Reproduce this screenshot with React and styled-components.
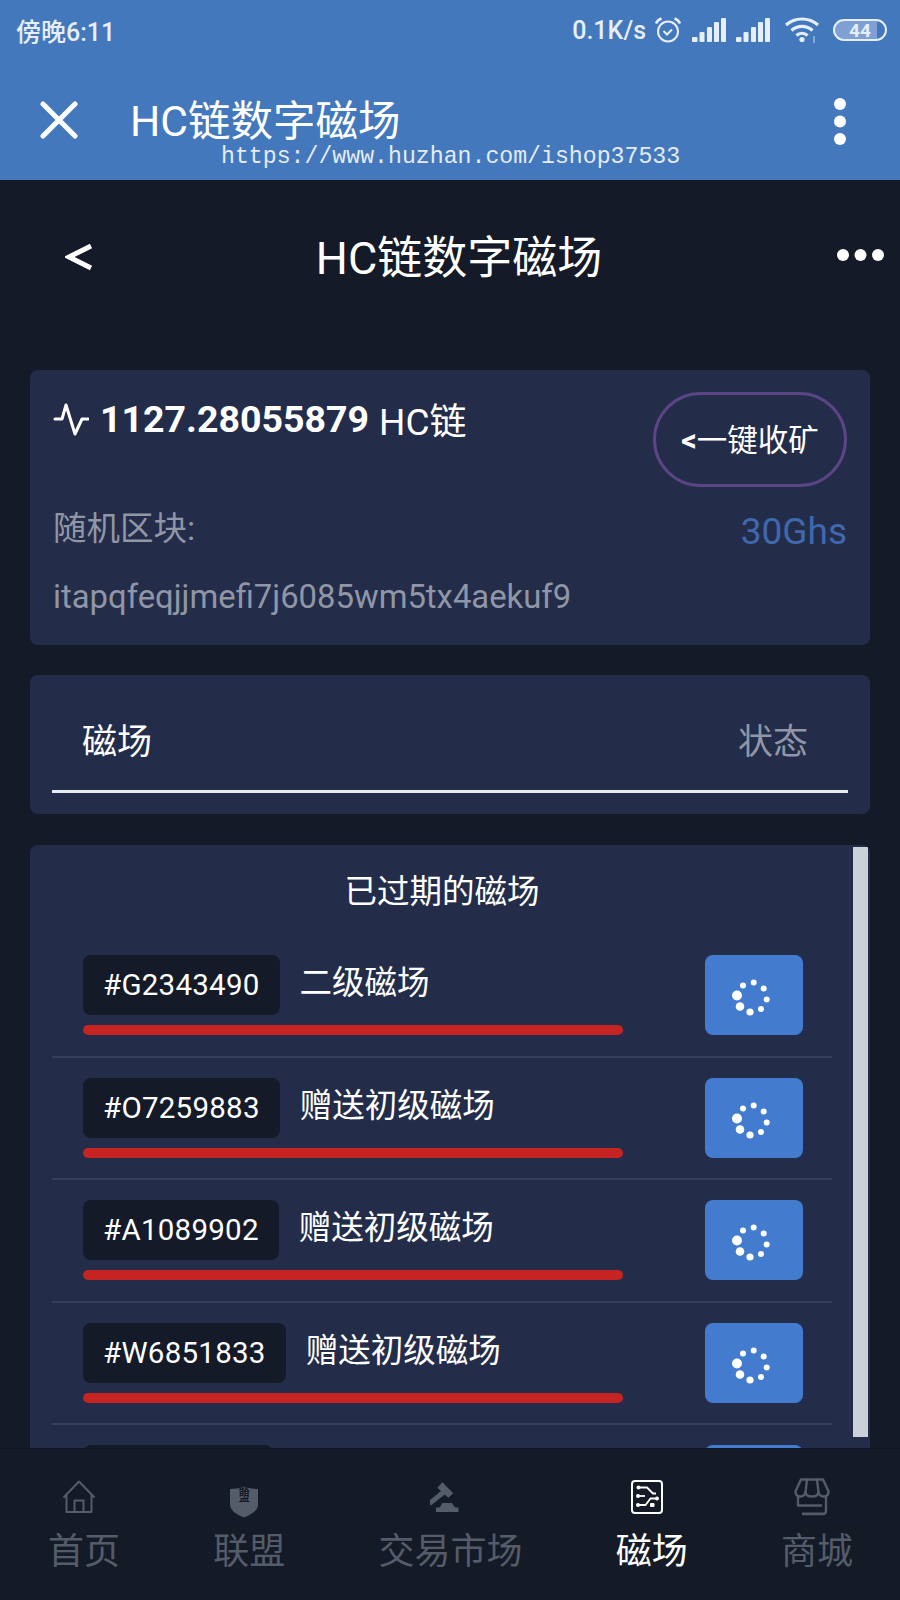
import React from "react";
import styled, { createGlobalStyle } from "styled-components";

const FONT = `Roboto, "Noto Sans CJK SC", sans-serif`;

const GlobalStyle = createGlobalStyle`
  html, body {
    margin: 0;
    padding: 0;
    background: #141a27;
  }
  * { box-sizing: border-box; }
`;

const Screen = styled.div`
  position: relative;
  width: 900px;
  height: 1600px;
  overflow: hidden;
  background: #141a27;
  color: #fff;
  font-family: ${FONT};
`;

const AppBar = styled.header`
  height: 180px;
  background: #4478bd;
  display: flex;
  flex-direction: column;
`;

const StatusBar = styled.div`
  height: 60px;
  padding: 0 13px 0 16px;
  display: flex;
  align-items: center;
  color: #e6eef8;
`;

const Clock = styled.span`
  font-size: 25px;
  font-weight: 500;
  flex: 1;
`;

const Speed = styled.span`
  font-size: 25px;
  font-weight: 500;
  margin-right: 8px;
`;

const StatusIcons = styled.div`
  display: flex;
  align-items: center;
  gap: 10px;
`;

const Battery = styled.div`
  width: 54px;
  height: 22px;
  border: 2.5px solid #e6eef8;
  border-radius: 11px;
  margin-left: 3px;
  display: flex;
  align-items: center;
  justify-content: center;
  font-size: 19px;
  font-weight: 700;
  color: #e6eef8;
  background: linear-gradient(90deg, #7ea0d4 84%, transparent 84%);
`;

const TitleBar = styled.div`
  flex: 1;
  padding: 0 54px 0 40px;
  display: flex;
  align-items: center;
`;

const BarTitle = styled.h1`
  flex: 1;
  margin: 4px 0 0 52px;
  font-size: 42.5px;
  font-weight: 400;
  line-height: 1;
`;

const KebabWrap = styled.div`
  display: flex;
  margin-top: 2px;
`;

const Watermark = styled.div`
  position: absolute;
  left: 221px;
  top: 144px;
  font-family: "Liberation Mono", monospace;
  font-size: 23.2px;
  line-height: 26px;
  color: #e4ebf6;
  white-space: nowrap;
`;

const PageHeader = styled.div`
  height: 150px;
  padding: 0 16px 0 65px;
  display: flex;
  align-items: center;
  justify-content: space-between;
  margin-bottom: 40px;
`;

const BackIcon = styled.svg`
  margin-top: 4px;
`;

const PageTitle = styled.h2`
  margin: 6px 12px 0 0;
  font-size: 45px;
  font-weight: 400;
  line-height: 1;
`;

const Content = styled.main`
  padding: 0 30px;
  display: flex;
  flex-direction: column;
  gap: 30px;
`;

const Card = styled.section`
  background: #232d4a;
  border-radius: 8px;
`;

const BalanceCard = styled(Card)`
  height: 275px;
  padding: 22px 23px 0 23px;
  display: flex;
  flex-direction: column;
`;

const BalanceTop = styled.div`
  display: flex;
  justify-content: space-between;
  align-items: flex-start;
  height: 112.5px;
`;

const Balance = styled.div`
  display: flex;
  align-items: center;
  font-size: 37px;
  height: 48px;
  margin-top: 3px;
`;

const BalanceValue = styled.b`
  font-size: 37.5px;
  font-weight: 700;
  margin: 0 10px 0 11px;
`;

const CollectButton = styled.button`
  width: 194px;
  height: 95px;
  border: 3px solid #5b4584;
  border-radius: 48px;
  background: transparent;
  color: #fff;
  font-family: ${FONT};
  font-size: 30.5px;
  padding: 0 0 4px;

  b {
    font-weight: 700;
  }
`;

const BlockRow = styled.div`
  display: flex;
  justify-content: space-between;
  align-items: flex-start;
`;

const MutedLabel = styled.span`
  font-size: 33.5px;
  color: #9096a6;
  line-height: 48px;
`;

const Hash = styled.div`
  font-size: 32.85px;
  color: #9096a6;
  line-height: 48px;
  margin-top: 17px;
`;

const Power = styled.span`
  font-size: 37px;
  color: #3f68ae;
  line-height: 48px;
  margin-top: 3.5px;
`;

const TabsCard = styled(Card)`
  height: 139px;
  padding: 0 22px;
  margin-bottom: 1px;
`;

const Tabs = styled.div`
  height: 118px;
  padding: 11px 40px 0 30px;
  display: flex;
  align-items: center;
  justify-content: space-between;
  border-bottom: 3px solid #e8ebf2;
  font-size: 35px;
`;

const TabMuted = styled.span`
  color: #9096a6;
`;

const ListCard = styled(Card)`
  position: relative;
  height: 640px;
  padding: 0 38px 0 22px;
  overflow: hidden;
`;

const Scrollbar = styled.div`
  position: absolute;
  right: 2.5px;
  top: 2px;
  width: 15px;
  height: 590px;
  background: #ccd0d9;
`;

const ListTitle = styled.div`
  height: 90px;
  padding-bottom: 4px;
  display: flex;
  align-items: center;
  justify-content: center;
  font-size: 32.5px;
`;

const Row = styled.div`
  height: 122.5px;
  border-bottom: 2px solid #363f5c;
  padding: 20px 29px 0 31px;
  display: flex;
  justify-content: space-between;
`;

const RowMain = styled.div`
  width: 540px;
`;

const RowHead = styled.div`
  display: flex;
  align-items: flex-start;
  height: 70px;
`;

const Tag = styled.span`
  height: 60px;
  min-width: 190px;
  padding: 0 20px;
  display: flex;
  align-items: center;
  background: #141a28;
  border-radius: 8px;
  font-size: 29.5px;
  letter-spacing: 0.25px;
`;

const RowName = styled.span`
  margin-left: 20px;
  font-size: 32.5px;
  line-height: 56px;
`;

const Progress = styled.div`
  height: 10px;
  border-radius: 5px;
  background: #c62323;
`;

const SpinnerButton = styled.button`
  width: 98px;
  height: 80px;
  padding: 0;
  border: 0;
  border-radius: 8px;
  background: #437bcf;
  display: flex;
  align-items: center;
  justify-content: center;
`;

const BottomNav = styled.nav`
  position: absolute;
  left: 0;
  right: 0;
  bottom: 0;
  height: 152px;
  padding: 20px 47px 0 48px;
  background: #141a26;
  border-top: 1px solid #0e1320;
  display: flex;
  justify-content: space-between;
`;

const NavItem = styled.a`
  display: flex;
  flex-direction: column;
  align-items: center;
  color: ${(p) => (p.$active ? "#ffffff" : "#545b69")};
  font-size: 36px;
  line-height: 54px;
`;

const NavIcon = styled.div`
  height: 56px;
  margin-right: 10px;
  display: flex;
  align-items: center;
`;

const ShieldBox = styled.div`
  position: relative;
  width: 30px;
  height: 32px;
  margin-bottom: 4px;
`;

const ShieldText = styled.span`
  position: absolute;
  left: 0;
  right: 0;
  top: 4px;
  font-size: 11px;
  font-weight: 700;
  line-height: 10px;
  width: 11px;
  margin: 0 auto;
  text-align: center;
  color: #141a26;
`;

function CloseIcon() {
  return (
    <svg width="38" height="38" viewBox="0 0 38 38">
      <path d="M3 3L35 35M35 3L3 35" stroke="#fff" strokeWidth="5" strokeLinecap="round" />
    </svg>
  );
}

function Dots({ vertical, size = 12, gap = 17.5 }) {
  const dots = [0, 1, 2].map((i) => (
    <circle
      key={i}
      cx={vertical ? size / 2 : size / 2 + i * gap}
      cy={vertical ? size / 2 + i * gap : size / 2}
      r={size / 2}
      fill="#fff"
    />
  ));
  const long = size + gap * 2;
  return (
    <svg width={vertical ? size : long} height={vertical ? long : size}>
      {dots}
    </svg>
  );
}

function AlarmIcon() {
  return (
    <svg width="28" height="28" viewBox="0 0 28 28" fill="none" stroke="#e6eef8" strokeWidth="2">
      <circle cx="14" cy="15.5" r="10" />
      <path d="M9.5 15l3.5 3.5 5-5" />
      <path d="M2 7.5C3 5 5 3.5 7.5 2.5M26 7.5C25 5 23 3.5 20.5 2.5" strokeWidth="2.5" />
    </svg>
  );
}

function SignalIcon() {
  return (
    <svg width="34" height="26" viewBox="0 0 34 26" fill="#e6eef8">
      <rect x="0" y="20" width="5.5" height="5" rx="1" />
      <rect x="7.5" y="15" width="5" height="10" rx="1" />
      <rect x="15" y="10" width="5" height="15" rx="1" />
      <rect x="22" y="5" width="5" height="20" rx="1" />
      <rect x="29" y="1" width="5" height="24" rx="1" />
    </svg>
  );
}

function WifiIcon() {
  return (
    <svg width="40" height="30" viewBox="-4 0 40 30" fill="none" stroke="#e6eef8" strokeWidth="3.2">
      <path d="M2 10C11 2 25 2 34 10" />
      <path d="M7.5 15.5C13.5 10 22.5 10 28.5 15.5" />
      <path d="M12.5 20.5C15.5 17.5 20.5 17.5 23.5 20.5" />
      <circle cx="18" cy="24.5" r="2.6" fill="#e6eef8" stroke="none" />
      <path d="M30 21v7" strokeWidth="1.4" opacity="0.6" />
    </svg>
  );
}

function PulseIcon() {
  return (
    <svg width="36" height="34" viewBox="0 0 36 34" fill="none" stroke="#fff" strokeWidth="3" strokeLinejoin="round" strokeLinecap="round">
      <path d="M2 17H9L13 3L22 32L29 17H35" />
    </svg>
  );
}

const SPINNER_DOTS = [
  [77, 65.5, 5],
  [80, 76.5, 4.3],
  [90, 82, 3.6],
  [101, 79, 3],
  [106.7, 69.5, 3],
  [103.7, 58.5, 3],
  [93.7, 52.5, 3],
  [83, 55.5, 3],
];

function Spinner() {
  return (
    <svg width="50" height="50" viewBox="69 40 50 50" fill="#fff">
      {SPINNER_DOTS.map(([cx, cy, r]) => (
        <circle key={cx} cx={cx} cy={cy} r={r} />
      ))}
    </svg>
  );
}

function HomeIcon() {
  return (
    <svg width="34" height="34" viewBox="0 0 34 34" fill="none" stroke="#545b69" strokeWidth="2" strokeLinejoin="round">
      <path d="M1.5 17.5L17 1.5L32.5 17.5M4.5 14.5V32H29.5V14.5" />
      <path d="M12.5 32V20.5H21.5V32" />
    </svg>
  );
}

function ShieldIcon() {
  return (
    <ShieldBox>
      <svg width="30" height="32" viewBox="0 0 30 32">
        <path d="M1 3Q8 3 15 .5Q22 3 29 3V19Q29 26 15 31.5Q1 26 1 19Z" fill="#545b69" />
      </svg>
      <ShieldText>联盟</ShieldText>
    </ShieldBox>
  );
}

function GavelIcon() {
  return (
    <svg width="30" height="31" viewBox="0 0 30 31" fill="#545b69">
      <path d="M7.3 5.7L12.3 .3L23.3 11.3L18.3 15.7Z" />
      <path d="M12.3 11.3L1 20.3" stroke="#545b69" strokeWidth="5" strokeLinecap="round" />
      <path d="M12.5 21H22L25 25.5H28.5V30H6V25.5H9.5Z" />
    </svg>
  );
}

function CircuitIcon() {
  return (
    <svg width="32" height="34" viewBox="0 0 32 34" fill="none" stroke="#fff" strokeWidth="1.8">
      <rect x="1" y="1" width="30" height="32" rx="3" strokeWidth="2" />
      <circle cx="7.5" cy="7.5" r="2" fill="#fff" stroke="none" />
      <circle cx="7" cy="16" r="2" fill="#fff" stroke="none" />
      <circle cx="7" cy="25" r="2" fill="#fff" stroke="none" />
      <circle cx="26" cy="18.5" r="2" fill="#fff" stroke="none" />
      <rect x="19" y="23" width="4.5" height="4" rx="1" fill="#fff" stroke="none" />
      <path d="M7.5 7.5H16L22 13.5H25" />
      <path d="M7 16H14" />
      <path d="M7 25H14.5L19.5 18.5H26" />
    </svg>
  );
}

function StoreIcon() {
  return (
    <svg width="36" height="38" viewBox="0 0 36 36" preserveAspectRatio="none" fill="none" stroke="#545b69" strokeWidth="2.4" strokeLinejoin="round" strokeLinecap="round">
      <path d="M7 1.5H29L34.5 12.5C34.5 19 26 19 24.5 13.5C23.5 19 12.5 19 11.5 13.5C10 19 1.5 19 1.5 12.5Z" />
      <path d="M13 1.5L11.5 13.5M23 1.5L24.5 13.5" />
      <path d="M4 18V26H27" />
      <path d="M9 34H29Q32 34 32 31V18" />
    </svg>
  );
}

// the fifth row only peeks out above the nav, nothing of its text shows
const ROWS = [
  { id: "#G2343490", name: "二级磁场" },
  { id: "#O7259883", name: "赠送初级磁场" },
  { id: "#A1089902", name: "赠送初级磁场" },
  { id: "#W6851833", name: "赠送初级磁场" },
  { id: "", name: "" },
];

const NAV = [
  { label: "首页", icon: <HomeIcon /> },
  { label: "联盟", icon: <ShieldIcon /> },
  { label: "交易市场", icon: <GavelIcon /> },
  { label: "磁场", icon: <CircuitIcon />, active: true },
  { label: "商城", icon: <StoreIcon /> },
];

export default function App() {
  return (
    <Screen>
      <GlobalStyle />
      <AppBar>
        <StatusBar>
          <Clock>傍晚6:11</Clock>
          <Speed>0.1K/s</Speed>
          <StatusIcons>
            <AlarmIcon />
            <SignalIcon />
            <SignalIcon />
            <WifiIcon />
            <Battery>44</Battery>
          </StatusIcons>
        </StatusBar>
        <TitleBar>
          <CloseIcon />
          <BarTitle>HC链数字磁场</BarTitle>
          <KebabWrap>
            <Dots vertical />
          </KebabWrap>
        </TitleBar>
      </AppBar>
      <Watermark>https://www.huzhan.com/ishop37533</Watermark>

      <PageHeader>
        <BackIcon width="28" height="30" viewBox="0 0 28 30" fill="none" stroke="#fff" strokeWidth="5">
          <path d="M26 4L4 15L26 26" />
        </BackIcon>
        <PageTitle>HC链数字磁场</PageTitle>
        <Dots size={12} gap={17.5} />
      </PageHeader>

      <Content>
        <BalanceCard>
          <BalanceTop>
            <Balance>
              <PulseIcon />
              <BalanceValue>1127.28055879</BalanceValue>
              HC链
            </Balance>
            <CollectButton>
              <b>&lt;</b>一键收矿
            </CollectButton>
          </BalanceTop>
          <BlockRow>
            <MutedLabel>随机区块:</MutedLabel>
            <Power>30Ghs</Power>
          </BlockRow>
          <Hash>itapqfeqjjmefi7j6085wm5tx4aekuf9</Hash>
        </BalanceCard>

        <TabsCard>
          <Tabs>
            <span>磁场</span>
            <TabMuted>状态</TabMuted>
          </Tabs>
        </TabsCard>

        <ListCard>
          <Scrollbar />
          <ListTitle>已过期的磁场</ListTitle>
          {ROWS.map((row, i) => (
            <Row key={i}>
              <RowMain>
                <RowHead>
                  <Tag>{row.id}</Tag>
                  <RowName>{row.name}</RowName>
                </RowHead>
                <Progress />
              </RowMain>
              <SpinnerButton aria-label="loading">
                <Spinner />
              </SpinnerButton>
            </Row>
          ))}
        </ListCard>
      </Content>

      <BottomNav>
        {NAV.map((item) => (
          <NavItem key={item.label} $active={item.active}>
            <NavIcon>{item.icon}</NavIcon>
            {item.label}
          </NavItem>
        ))}
      </BottomNav>
    </Screen>
  );
}
